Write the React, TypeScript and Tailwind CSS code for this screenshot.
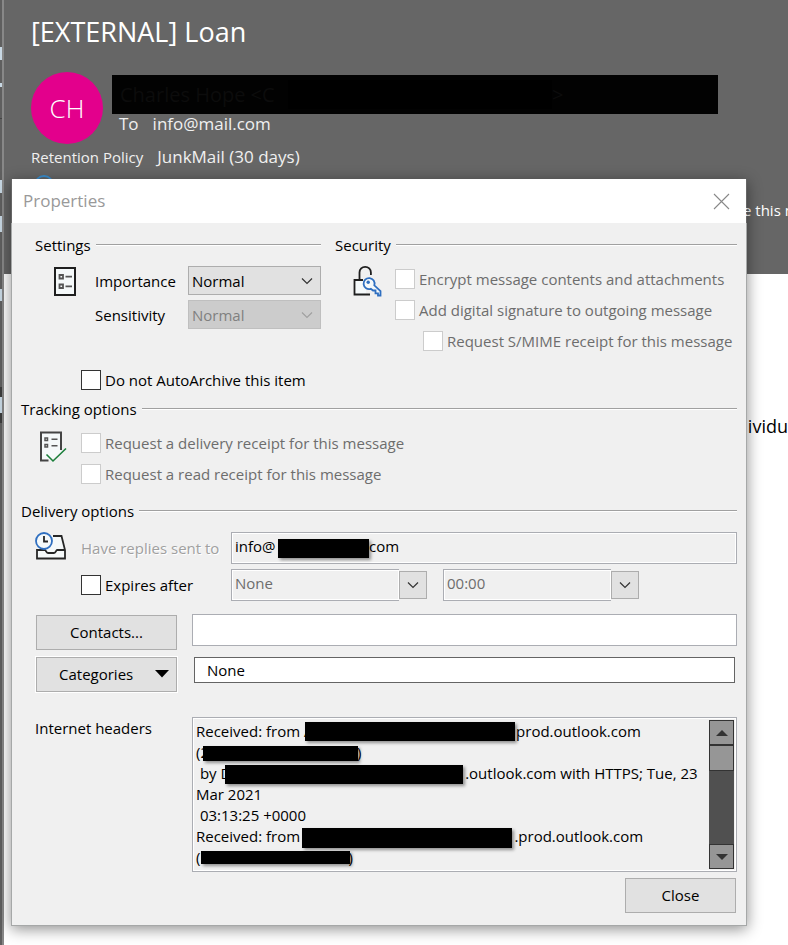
import React from "react";

const line = "h-[2px] flex-1 border-t border-[#a0a0a0] bg-white";

function SectionTitle({ children }: { children: React.ReactNode }) {
  return (
    <div className="flex h-5 items-center gap-[5px]">
      <h2 className="leading-5 whitespace-nowrap">{children}</h2>
      <div className={line} />
    </div>
  );
}

function Check({ id, label, disabled = false, indent = false }: { id: string; label: string; disabled?: boolean; indent?: boolean }) {
  return (
    <div className={`flex h-5 items-center gap-1 ${indent ? "pl-7" : ""}`}>
      <input
        id={id}
        type="checkbox"
        disabled={disabled}
        className="size-5 shrink-0 appearance-none border border-[#333333] bg-white checked:bg-[#333333] disabled:border-[#cccccc]"
      />
      <label htmlFor={id} className={`leading-5 whitespace-nowrap ${disabled ? "text-[#6d6d6d]" : ""}`}>
        {label}
      </label>
    </div>
  );
}

function Chevron({ className }: { className: string }) {
  return (
    <svg width="12" height="8" viewBox="0 0 12 8" fill="none" stroke="currentColor" strokeWidth="1.2" className={className} aria-hidden="true">
      <path d="M1 1.5 6 6.5 11 1.5" />
    </svg>
  );
}

function Dropdown({ id, disabled = false }: { id: string; disabled?: boolean }) {
  return (
    <div className="relative w-[133px]">
      <select
        id={id}
        disabled={disabled}
        className="block h-[29px] w-full appearance-none border border-[#adadad] bg-[#e1e1e1] pl-[3px] text-black opacity-100 disabled:border-[#bfbfbf] disabled:bg-[#cccccc] disabled:text-[#808080]"
      >
        <option>Normal</option>
        <option>Private</option>
      </select>
      <Chevron className={`pointer-events-none absolute top-[11px] right-2 ${disabled ? "text-[#a0a0a0]" : "text-[#333333]"}`} />
    </div>
  );
}

function Combo({ value, label }: { value: string; label: string }) {
  return (
    <div className="flex items-center">
      <input
        aria-label={label}
        disabled
        defaultValue={value}
        className="h-8 w-[168px] border border-r-0 border-[#abadb3] bg-[#f0f0f0] pb-1 pl-[3px] text-[#6d6d6d] inset-ring inset-ring-white"
      />
      <button aria-label={`Choose ${label}`} className="flex h-7 w-7 items-center justify-center border border-[#adadad] bg-[#e1e1e1] text-[#333333]">
        <Chevron className="" />
      </button>
    </div>
  );
}

function ListIcon() {
  return (
    <svg width="24" height="30" viewBox="0 0 24 30" fill="none" aria-hidden="true">
      <rect x="2" y="2" width="20" height="27" fill="#f5f9fa" stroke="#1f1f1f" strokeWidth="2" />
      <path d="M6.5 9h3.500v3.500h-3.500zM6.500 18.500h3.500V22h-3.500z" stroke="#555" strokeWidth="1.800" />
      <path d="M12.500 10.700H19M12.500 20.300H19" stroke="#555" strokeWidth="1.800" />
    </svg>
  );
}

function LockIcon() {
  return (
    <svg width="30" height="32" viewBox="0 0 30 32" fill="none" aria-hidden="true">
      <path d="M1.500 15H13v14H1.500z" fill="#f5f9fa" />
      <path d="M10 15H1.500v14.500H17" stroke="#1f1f1f" strokeWidth="1.800" />
      <path d="M6.500 15V7.500a5.700 5.700 0 0 1 11.400 0V10" stroke="#1f1f1f" strokeWidth="1.800" />
      <path d="M21.300 20.300A5.500 5.500 0 1 0 17.800 23.800L20 25.500h2.500v2.800h2.500v2.200h2.500v-4.300z" fill="#f5f9fa" stroke="#2f6fc0" strokeWidth="1.800" />
      <circle cx="15.200" cy="17.300" r="1.700" fill="#2f6fc0" />
    </svg>
  );
}

function TrackIcon() {
  return (
    <svg width="28" height="32" viewBox="0 0 28 32" fill="none" aria-hidden="true">
      <path d="M2 1.500h20v20l-7 6-5 1H2z" fill="#f5f9fa" />
      <path d="M22 19V1.500H2V29.500H9.500" stroke="#444" strokeWidth="2" />
      <path d="M6 7h2.500v2.500H6zM6 13.500h2.500V16H6z" stroke="#555" strokeWidth="1.500" />
      <path d="M12.500 8.200H18.500M12.500 14.700H18.500" stroke="#555" strokeWidth="1.500" />
      <path d="M7.500 23.500 14 30 27 17.500" stroke="#1b7f3b" strokeWidth="1.600" />
    </svg>
  );
}

function DeliveryIcon() {
  return (
    <svg width="32" height="28" viewBox="0 0 32 28" fill="none" aria-hidden="true">
      <path d="M2 18 6 4h20l4 14v9H2z" fill="#f5f9fa" />
      <path d="M18 4h8.500L30 18v8.500H2V18h8c1 0 1 3 3 3h6c2 0 2-3 3-3h8" stroke="#262626" strokeWidth="1.800" />
      <circle cx="9" cy="9" r="8" fill="#f5f9fa" stroke="#2f6fc0" strokeWidth="1.800" />
      <path d="M9 4v5.500h4" stroke="#262626" strokeWidth="1.800" />
    </svg>
  );
}

const bar = "pointer-events-none absolute bg-black shadow-[2px_2px_3px_rgba(0,0,0,0.4)]";
const button = "h-[35px] border border-[#adadad] bg-[#e1e1e1] pb-px";

const gap = (n: number) => " ".repeat(n);
const headers = [
  `Received: from A${gap(52)}prod.outlook.com`,
  `(2${gap(38)})`,
  ` by D${gap(60)}.outlook.com with HTTPS; Tue, 23`,
  "Mar 2021",
  " 03:13:25 +0000",
  `Received: from ${gap(54)}.prod.outlook.com`,
  `(${gap(38)})`,
].join("\n");

function PropertiesDialog() {
  return (
    <div role="dialog" aria-label="Properties" className="absolute top-[179px] right-[41px] left-[11px] text-[15px] leading-5 text-black shadow-[0_3px_14px_rgba(0,0,0,0.45)]">
      <div className="mx-px flex h-11 items-center justify-between bg-white pr-4 pl-[11px]">
        <span className="text-[17px] text-[#999999]">Properties</span>
        <button aria-label="Close window" className="text-[#888888]">
          <svg width="17" height="17" viewBox="0 0 17 17" stroke="currentColor" strokeWidth="1.100" aria-hidden="true">
            <path d="M1 1 16 16M16 1 1 16" />
          </svg>
        </button>
      </div>

      <div className="border border-t-0 border-[#a6a8a8] bg-[#f0f0f0] pt-3 pr-[9px] pb-3">
        <div className="flex gap-[14px] pl-[23px]">
          <section className="w-[286px]">
            <SectionTitle>Settings</SectionTitle>
            <div className="flex pt-[11px] pl-[18px]">
              <ListIcon />
              <div className="flex flex-1 flex-col gap-[5px] pl-[18px]">
                <div className="flex items-center justify-between">
                  <label htmlFor="importance">Importance</label>
                  <Dropdown id="importance" />
                </div>
                <div className="flex items-center justify-between">
                  <label htmlFor="sensitivity">Sensitivity</label>
                  <Dropdown id="sensitivity" disabled />
                </div>
              </div>
            </div>
          </section>
          <section className="flex-1">
            <SectionTitle>Security</SectionTitle>
            <div className="flex gap-3 pt-[14px] pl-[18px]">
              <div className="-mt-1">
                <LockIcon />
              </div>
              <div className="flex flex-col gap-[11px]">
                <Check id="encrypt" label="Encrypt message contents and attachments" disabled />
                <Check id="sign" label="Add digital signature to outgoing message" disabled />
                <Check id="smime" label="Request S/MIME receipt for this message" disabled indent />
              </div>
            </div>
          </section>
        </div>

        <div className="pt-[19px] pl-[69px]">
          <Check id="archive" label="Do not AutoArchive this item" />
        </div>

        <section className="pt-[9px] pl-[9px]">
          <SectionTitle>Tracking options</SectionTitle>
          <div className="flex pt-3 pl-[18px]">
            <TrackIcon />
            <div className="flex flex-col gap-[11px] pt-[2px] pl-[14px]">
              <Check id="delivery" label="Request a delivery receipt for this message" disabled />
              <Check id="read" label="Request a read receipt for this message" disabled />
            </div>
          </div>
        </section>

        <section className="pt-[17px] pl-[9px]">
          <SectionTitle>Delivery options</SectionTitle>
          <div className="flex pt-[11px] pl-[14px]">
            <DeliveryIcon />
            <div className="flex flex-1 flex-col gap-[5px] pl-[14px]">
              <div className="flex items-center">
                <label htmlFor="replies" className="w-[150px] text-[#a0a0a0] text-shadow-[1px_1px_0_#ffffff]">
                  Have replies sent to
                </label>
                <div className="relative flex-1">
                  <input
                    id="replies"
                    readOnly
                    value={`info@${gap(23)}.com`}
                    className="block h-8 w-full border border-[#abadb3] bg-[#f0f0f0] pb-1 pl-[3px] inset-ring inset-ring-white"
                  />
                  <span className={`${bar} top-[7px] left-[47px] h-[19px] w-[91px]`} />
                </div>
              </div>
              <div className="flex items-center">
                <div className="w-[150px]">
                  <Check id="expires" label="Expires after" />
                </div>
                <div className="flex gap-4">
                  <Combo value="None" label="expiry date" />
                  <Combo value="00:00" label="expiry time" />
                </div>
              </div>
            </div>
          </div>
        </section>

        <div className="flex items-start gap-[15px] pt-[13px] pl-6">
          <button className={`${button} mt-px w-[141px]`}>Contacts...</button>
          <input aria-label="Contacts" className="h-8 flex-1 border border-[#abadb3] bg-white px-1" />
        </div>
        <div className="flex items-start gap-[17px] pt-[7px] pr-[2px] pl-6">
          <button className={`${button} flex w-[141px] items-center justify-between pr-[7px] pl-[22px] outline outline-white`}>
            <span>
              Cate<span className="underline underline-offset-2">g</span>ories
            </span>
            <svg width="14" height="8" viewBox="0 0 14 8" aria-hidden="true">
              <path d="M0 0h14L7 7.500z" />
            </svg>
          </button>
          <input aria-label="Categories" defaultValue="None" className="h-[26px] flex-1 border border-[#646464] bg-white pl-3" />
        </div>

        <div className="flex items-start pt-[25px] pl-[23px]">
          <label htmlFor="headers" className="w-[157px] pt-px">
            Internet headers
          </label>
          <div className="flex h-[155px] flex-1 border border-[#abadb3] bg-[#f0f0f0] p-[2px] inset-ring inset-ring-white">
            <div className="relative flex-1">
              <textarea
                id="headers"
                readOnly
                value={headers}
                className="block h-full w-full resize-none overflow-hidden bg-transparent pt-px pl-px leading-[21px] whitespace-pre"
              />
              <span className={`${bar} top-[2px] left-[110px] h-[19px] w-[210px]`} />
              <span className={`${bar} top-[26px] left-2 h-[15px] w-[155px]`} />
              <span className={`${bar} top-[45px] left-[30px] h-[19px] w-[238px]`} />
              <span className={`${bar} top-[108px] left-[107px] h-[20px] w-[210px]`} />
              <span className={`${bar} top-[131px] left-[6px] h-[13px] w-[149px]`} />
            </div>
            <div className="flex w-[25px] flex-col bg-[#505050]">
              <button aria-label="Scroll up" className="flex h-[25px] items-center justify-center border border-[#333333] bg-[#969696]">
                <svg width="12" height="6" viewBox="0 0 12 6" fill="#333333" aria-hidden="true">
                  <path d="M0 6h12L6 0z" />
                </svg>
              </button>
              <div className="h-[26px] border border-[#333333] bg-[#969696]" />
              <div className="flex-1" />
              <button aria-label="Scroll down" className="flex h-[25px] items-center justify-center border border-[#333333] bg-[#969696]">
                <svg width="12" height="6" viewBox="0 0 12 6" fill="#333333" aria-hidden="true">
                  <path d="M0 0h12L6 6z" />
                </svg>
              </button>
            </div>
          </div>
        </div>

        <div className="flex justify-end pt-[6px] pr-px">
          <button className={`${button} w-[111px]`}>Close</button>
        </div>
      </div>
    </div>
  );
}

function MessageListEdge() {
  const mark = "w-[2px] bg-[#c8d8e4]";
  return (
    <div className="flex w-1 shrink-0 flex-col border-r-2 border-[#888888] bg-[#5f5f5f]">
      <div className={`${mark} mt-[47px] h-[13px]`} />
      <div className={`${mark} mt-[23px] h-1`} />
      <div className="mt-[31px] h-px bg-[#444444]" />
      <div className={`${mark} mt-[61px] h-[13px]`} />
      <div className={`${mark} mt-[23px] h-4`} />
      <div className={`${mark} mt-[57px] h-3`} />
      <div className="mt-[86px] h-9 bg-[#3c3c3c] pt-[10px]">
        <div className={`${mark} h-4`} />
      </div>
    </div>
  );
}

export default function App() {
  return (
    <div className="relative flex min-h-screen overflow-hidden bg-white font-['Open_Sans','Noto_Sans',sans-serif]">
      <MessageListEdge />
      <main className="min-w-0 flex-1">
        <header className="h-[274px] bg-[#666666] pt-4 pl-[27px] text-white">
          <h1 className="text-[27px] leading-8">[EXTERNAL] Loan</h1>
          <div className="flex gap-[9px] pt-6">
            <div className="flex size-[72px] items-center justify-center rounded-full bg-[#e3008c] text-[26px] font-light">CH</div>
            <div className="min-w-0 flex-1 pt-[3px] pr-[70px]">
              <div className="flex h-[39px] items-center bg-[#020202] pl-2 text-[20px] text-[#0c0c0c]">
                <span className="w-[168px] overflow-hidden whitespace-nowrap">Charles Hope &lt;C</span>
                <span className="h-[29px] w-[264px] bg-black" />
                <span>&gt;</span>
              </div>
              <div className="flex gap-[14px] pl-[7px] text-[17px] leading-5 text-[#f0f0f0]">
                <span>To</span>
                <span>info@mail.com</span>
              </div>
            </div>
          </div>
          <div className="flex items-center gap-[14px] pt-[3px] leading-5 text-[#f0f0f0]">
            <span className="text-[15px]">Retention Policy</span>
            <span className="text-[17px]">JunkMail (30 days)</span>
          </div>
          <div className="flex items-start justify-between pt-2 pl-[3px]">
            <svg width="20" height="20" viewBox="0 0 20 20" fill="none" stroke="#3a8fd0" strokeWidth="2" aria-hidden="true">
              <circle cx="10" cy="10" r="9" />
              <path d="M10 9v6M10 5v2" />
            </svg>
            <span className="w-[45px] pt-[25px] text-[15px] leading-5 whitespace-nowrap">e this m</span>
          </div>
        </header>
        <p className="pt-[138px] text-right text-[18px] leading-7 text-black">ividu</p>
      </main>
      <PropertiesDialog />
    </div>
  );
}
